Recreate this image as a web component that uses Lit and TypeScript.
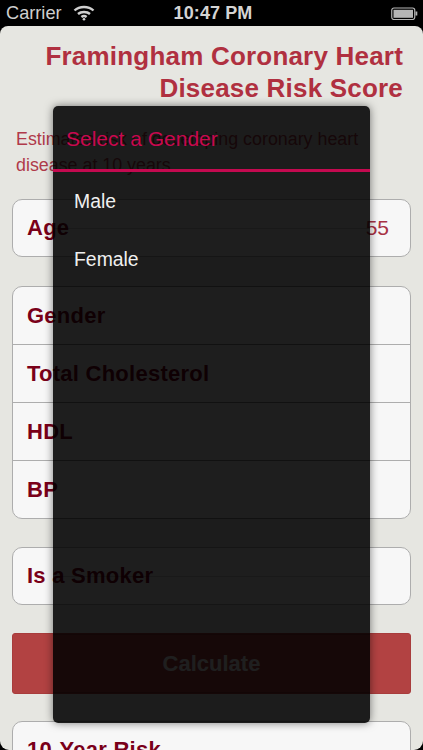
import { LitElement, html, css } from "lit";
import { customElement } from "lit/decorators.js";

@customElement("app-root")
export class AppRoot extends LitElement {
  static styles = css`
    :host { display: block; width: 423px; height: 750px; overflow: hidden; background: #000; position: relative; font-family: "Liberation Sans", Arial, sans-serif; }
    .status { height: 26px; background: #000; color: #cfcfcf; display: grid; grid-template-columns: 1fr auto 1fr; align-items: center; padding: 0 5px 0 6px; box-sizing: border-box; font-size: 18.2px; }
    .sl { display: flex; align-items: center; gap: 11px; }
    .sr { display: flex; justify-content: flex-end; }
    .time { font-weight: 700; font-size: 18px; letter-spacing: .1px; color: #d4d4d4; margin-left: 2px; }
    .page { height: 724px; background: #e6e6e1; border-radius: 8px 8px 9px 9px; overflow: hidden; padding: 14px 12px 0 12px; box-sizing: border-box; display: flex; flex-direction: column; }
    h1 { margin: 0 8px 0 0; text-align: right; color: #b03040; font-size: 26px; line-height: 32px; font-weight: 700; letter-spacing: .2px; }
    .lead { margin: 23px 0 0 4px; color: #b03a4a; font-size: 17.85px; line-height: 25.5px; }
    .card { background: #f7f7f7; border: 1px solid #adadad; border-radius: 10px; box-sizing: border-box; flex: none; }
    .age { margin-top: 21px; }
    .row { height: 58px; display: flex; align-items: center; justify-content: space-between; padding: 0 21px 0 14px; box-sizing: border-box; color: #7a0019; font-weight: 700; font-size: 22px; letter-spacing: .25px; }
    .row:first-child { height: 56px; }
    .group .row:first-child { height: 57px; }
    .row + .row { border-top: 1px solid #adadad; }
    .value { font-weight: 400; font-size: 21px; letter-spacing: 0; color: #a83245; }
    .group { margin-top: 29px; }
    .smoker { margin-top: 28px; }
    .btn { margin-top: 28px; height: 61px; flex: none; background: #b24242; border: 1px solid #a83c3c; border-radius: 3px; box-sizing: border-box; display: flex; align-items: center; justify-content: center; color: #fff; font-size: 22px; font-weight: 700; }
    .risk { margin-top: 27px; }
    .dialog { position: absolute; left: 53px; top: 106px; width: 317px; height: 617px; background: rgba(0,0,0,.88); border-radius: 5px; box-shadow: 0 0 8px rgba(0,0,0,.5); overflow: hidden; }
    .title { height: 66px; box-sizing: border-box; border-bottom: 3px solid #c40a50; color: #c8094f; font-size: 21px; padding-left: 13px; display: flex; align-items: center; padding-top: 3px; }
    .list { margin-top: -1px; }
    .opt { height: 58px; display: flex; align-items: center; padding: 3px 0 0 21px; color: #f0f0f0; font-size: 19.4px; box-sizing: border-box; border-bottom: 1px solid rgba(0,0,0,.15); }
  `;

  render() {
    const empty = Array.from({ length: 7 });
    return html`
      <div class="status">
        <div class="sl"><span>Carrier</span>
          <svg width="22" height="16" viewBox="0 0 22 16" fill="none" stroke="#d0d0d0" stroke-width="2.4">
            <path d="M1.5 5.5 C6.5 .8 15.5 .8 20.5 5.5"/><path d="M5 9 C8 6.3 14 6.3 17 9"/><path d="M8.4 12 C9.8 10.9 12.2 10.9 13.6 12"/>
            <circle cx="11" cy="14.2" r="1.3" fill="#d0d0d0" stroke="none"/>
          </svg>
        </div>
        <div class="time">10:47 PM</div>
        <div class="sr">
          <svg width="27" height="13" viewBox="0 0 27 13">
            <rect x=".75" y="1" width="23" height="11.5" rx="2.2" fill="none" stroke="#b5b5b5" stroke-width="1.2"/>
            <rect x="2.5" y="2.8" width="19.5" height="8" fill="#b5b5b5"/>
            <rect x="24.5" y="4.5" width="1.8" height="4" fill="#b5b5b5"/>
          </svg>
        </div>
      </div>
      <div class="page">
        <h1>Framingham Coronary Heart<br />Disease Risk Score</h1>
        <p class="lead">Estimates risk of developing coronary heart disease at 10 years</p>
        <div class="card age"><div class="row"><span>Age</span><span class="value">55</span></div></div>
        <div class="card group">
          <div class="row">Gender</div><div class="row">Total Cholesterol</div><div class="row">HDL</div><div class="row">BP</div>
        </div>
        <div class="card smoker"><div class="row">Is a Smoker</div></div>
        <div class="btn">Calculate</div>
        <div class="card risk"><div class="row">10-Year Risk</div></div>
      </div>
      <div class="dialog">
        <div class="title">Select a Gender</div>
        <div class="list">
          <div class="opt">Male</div>
          <div class="opt">Female</div>
          ${empty.map(() => html`<div class="opt"></div>`)}
        </div>
      </div>
    `;
  }
}
